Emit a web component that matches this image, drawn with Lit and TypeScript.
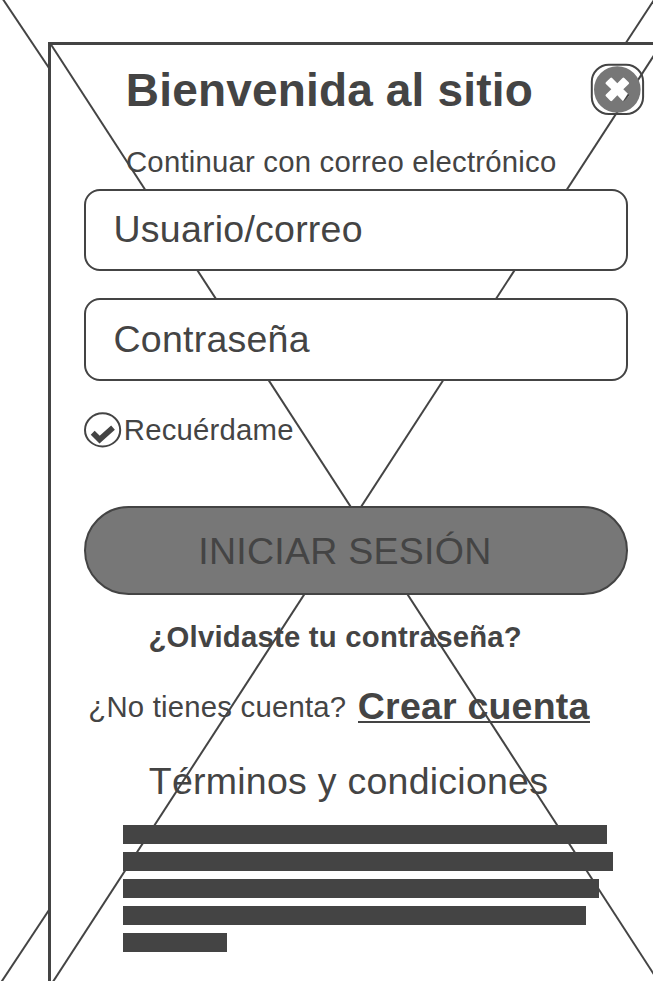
import { LitElement, html, css, svg } from "lit";
import { customElement } from "lit/decorators.js";

const backdropLines = [
  [2.8, -1, 50, 69.5],
  [654, 0, 625.5, 43.5],
  [1, 982.5, 50, 908.5],
];
const panelLines = [
  [50, 43, 654.3, 975],
  [654.5, 54.5, 52.5, 982.5],
];
const copyBars = [484, 490, 476, 463, 104];

const line = ([x1, y1, x2, y2]: number[]) =>
  svg`<line x1=${x1} y1=${y1} x2=${x2} y2=${y2} />`;

@customElement("app-root")
export class AppRoot extends LitElement {
  static styles = css`
    :host {
      display: block;
      position: relative;
      width: 653px;
      height: 981px;
      overflow: hidden;
      background: #fff;
      color: #444;
      font-family: "Liberation Sans", Arial, sans-serif;
      font-size: 29.3px;
      letter-spacing: 0.22px;
      white-space: nowrap;
    }
    * { box-sizing: border-box; }
    .lines {
      position: absolute;
      inset: 0;
      width: 653px;
      height: 981px;
      stroke: #444;
      stroke-width: 2;
      fill: none;
    }
    .panel {
      position: relative;
      width: 640px;
      height: 960px;
      margin: 42px 0 0 48px;
      border: 3px solid #444;
      background: #fff;
    }
    .panel-lines { left: -51px; top: -45px; }
    .content {
      position: relative;
      display: flex;
      flex-direction: column;
      align-items: flex-start;
      padding: 19px 0 0 33.3px;
    }
    .header {
      display: flex;
      align-items: center;
      height: 51px;
      padding-left: 41.5px;
    }
    h1 {
      width: 464.2px;
      margin: 0;
      font-size: 46px;
      line-height: 50px;
      letter-spacing: 0.17px;
    }
    .close { padding: 0; border: 0; background: none; width: 55px; height: 53px; }
    .close svg, .check svg { display: block; }
    .subtitle { margin: 32px 0 11.6px 41.7px; line-height: 30px; }
    .field {
      display: flex;
      align-items: center;
      width: 543.4px;
      height: 82.5px;
      margin-bottom: 27.3px;
      padding: 0 0 0 27.2px;
      border: 2px solid #444;
      border-radius: 16px;
      background: #fff;
      font-size: 37.5px;
      letter-spacing: 0.24px;
    }
    .remember { display: flex; align-items: center; height: 36px; margin-top: 4px; }
    .remember-text { padding-left: 0.5px; }
    .check { width: 39px; height: 36px; }
    .submit {
      display: flex;
      align-items: center;
      width: 543.4px;
      height: 89px;
      margin-top: 58px;
      padding: 1px 0 0 112px;
      border: 2px solid #444;
      border-radius: 45px;
      background: #777;
      color: #444;
      font: 37.5px "Liberation Sans", Arial, sans-serif;
      letter-spacing: 0.26px;
    }
    .forgot { margin: 27px 0 0 64.2px; line-height: 30px; font-weight: 700; }
    .register {
      display: flex;
      align-items: center;
      height: 44px;
      margin: 33px 0 0 4px;
      gap: 11.5px;
    }
    .create {
      border-bottom: 2px solid #444;
      height: 32px;
      line-height: 30px;
      font-size: 37.5px;
      font-weight: 700;
      letter-spacing: 0.2px;
    }
    .terms {
      margin: 31px 0 0 64.5px;
      font-size: 37.5px;
      line-height: 42px;
      letter-spacing: 0.25px;
    }
    .copy { display: grid; gap: 8px; margin: 22.6px 0 0 38.7px; }
    .bar { height: 19px; background: #444; }
  `;

  render() {
    return html`
      <svg class="lines">${backdropLines.map(line)}</svg>
      <main class="panel">
        <svg class="lines panel-lines">${panelLines.map(line)}</svg>
        <div class="content">
          <div class="header">
            <h1>Bienvenida al sitio</h1>
            <button class="close" aria-label="Cerrar">
              <svg width="55" height="53" viewBox="0 0 55 53">
                <rect x="1.8" y="1.8" width="51.3" height="49.2" rx="17" fill="none" stroke="#444" stroke-width="2" />
                <path fill="#777" fill-rule="evenodd" d="M27.3 3.2a23.3 23.3 0 1 1 0 46.6a23.3 23.3 0 1 1 0-46.6Z
                  M20.3 14.9Q21.2 14 22.1 14.9L27.3 20.3L32.5 14.9Q33.4 14 34.3 14.9L38.7 19.3Q39.6 20.2 38.7 21.1L33.3 26.3L38.7 31.5Q39.6 32.4 38.7 33.3L34.3 37.7Q33.4 38.6 32.5 37.7L27.3 32.3L22.1 37.7Q21.2 38.6 20.3 37.7L15.9 33.3Q15 32.4 15.9 31.5L21.3 26.3L15.9 21.1Q15 20.2 15.9 19.3Z" />
              </svg>
            </button>
          </div>
          <div class="subtitle">Continuar con correo electrónico</div>
          <div class="field">Usuario/correo</div>
          <div class="field">Contraseña</div>
          <label class="remember">
            <span class="check">
              <svg width="39" height="36" viewBox="0 0 39 36">
                <ellipse cx="18.6" cy="17.9" rx="17.6" ry="16.6" fill="none" stroke="#444" stroke-width="2" />
                <path d="M8.7 20.8L15.6 27.6L29 15.6" fill="none" stroke="#444" stroke-width="5.6" />
              </svg>
            </span>
            <span class="remember-text">Recuérdame</span>
          </label>
          <button class="submit">INICIAR SESIÓN</button>
          <div class="forgot">¿Olvidaste tu contraseña?</div>
          <div class="register">
            <span>¿No tienes cuenta?</span>
            <span class="create">Crear cuenta</span>
          </div>
          <div class="terms">Términos y condiciones</div>
          <div class="copy">
            ${copyBars.map((w) => html`<div class="bar" style="width:${w}px"></div>`)}
          </div>
        </div>
      </main>
    `;
  }
}
